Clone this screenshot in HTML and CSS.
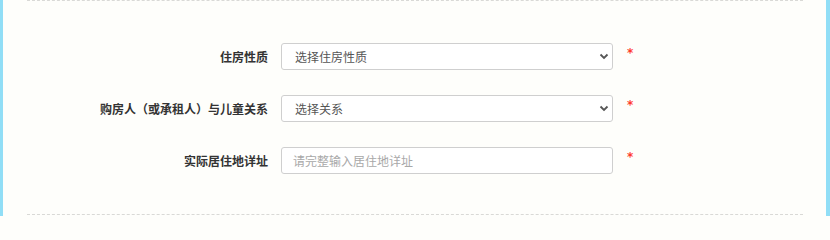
FILE: index.html
```html
<!DOCTYPE html>
<html lang="zh-CN">
<head>
<meta charset="utf-8">
<title>表单</title>
<link rel="stylesheet" href="styles.css">
</head>
<body>
<div class="page">
  <div class="section">
    <div class="row">
      <label class="label">住房性质</label>
      <div class="field">
        <select class="control select"><option>选择住房性质</option></select>
        <svg class="chev" width="10" height="7" viewBox="0 0 10 7"><path d="M1.5 1.5 L5 5 L8.5 1.5" fill="none" stroke="#555" stroke-width="1.8"/></svg>
      </div>
      <span class="req">*</span>
    </div>
    <div class="row">
      <label class="label">购房人（或承租人）与儿童关系</label>
      <div class="field">
        <select class="control select"><option>选择关系</option></select>
        <svg class="chev" width="10" height="7" viewBox="0 0 10 7"><path d="M1.5 1.5 L5 5 L8.5 1.5" fill="none" stroke="#555" stroke-width="1.8"/></svg>
      </div>
      <span class="req">*</span>
    </div>
    <div class="row">
      <label class="label">实际居住地详址</label>
      <div class="field">
        <input class="control input" type="text" placeholder="请完整输入居住地详址">
      </div>
      <span class="req">*</span>
    </div>
  </div>
</div>
</body>
</html>
```

FILE: styles.css
```css
html, body {
  margin: 0;
  padding: 0;
  background: #fefefb;
  height: 216px;
  overflow: hidden;
}
body {
  font-family: "Noto Sans CJK SC", "Noto Sans", sans-serif;
}
.page {
  width: 830px;
  height: 216px;
  box-sizing: border-box;
  border-left: 3px solid #91def6;
  border-right: 4px solid #91def6;
  background: #fefefb;
  overflow: hidden;
}
.section {
  margin-left: 24px;
  width: 776px;
  border-top: 1px dashed #d9d9d6;
  border-bottom: 1px dashed #d9d9d6;
  box-sizing: border-box;
  height: 215px;
  padding-top: 42px;
  display: flex;
  flex-direction: column;
  gap: 25px;
}
.row {
  display: flex;
  align-items: center;
  height: 27px;
}
.label {
  width: 241px;
  flex: none;
  text-align: right;
  font-size: 12px;
  font-weight: bold;
  color: #333;
  margin-right: 13px;
  white-space: nowrap;
}
.field {
  position: relative;
  width: 332px;
  height: 27px;
  flex: none;
}
.control {
  width: 100%;
  height: 27px;
  box-sizing: border-box;
  border: 1px solid #cfcfcf;
  border-radius: 3px;
  background: #fff;
  font-family: "Noto Sans CJK SC", "Noto Sans", sans-serif;
  font-size: 12px;
  color: #555;
  outline: none;
  margin: 0;
}
.select {
  appearance: none;
  -webkit-appearance: none;
  padding: 0 24px 0 13px;
}
.input {
  padding: 0 11px;
}
.input::placeholder {
  color: #a8a8a8;
}
.chev {
  position: absolute;
  right: 4px;
  top: 10px;
  pointer-events: none;
}
.req {
  align-self: flex-start;
  margin-left: 14px;
  color: #ff3b2f;
  font-size: 12px;
  font-weight: bold;
  font-family: "DejaVu Sans", sans-serif;
  line-height: 12px;
  padding-top: 4px;
}
```
